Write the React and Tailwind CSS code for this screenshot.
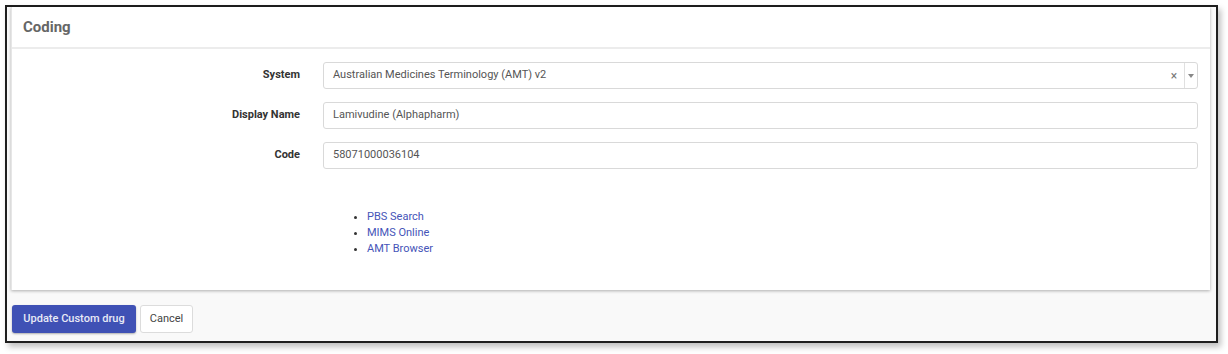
import React from 'react'

const font = { fontFamily: 'Roboto, "Liberation Sans", sans-serif' }

function Row({ label, children }) {
  return (
    <div className="flex items-center">
      <label className="w-[288px] shrink-0 text-right text-[11px] font-bold text-[#333]">{label}</label>
      <div className="ml-[23px] flex-1">{children}</div>
    </div>
  )
}

export default function App() {
  const links = ['PBS Search', 'MIMS Online', 'AMT Browser']
  return (
    <div className="w-[1228px] h-[354px] bg-white pt-[5px] pl-[5px]" style={font}>
      <div className="w-[1213px] h-[338px] border-2 border-[#1e1e1e] bg-[#f9f9f9] shadow-[3px_4px_6px_rgba(0,0,0,0.25)] flex flex-col">
        <div className="ml-[4px] mr-[6px] bg-white shadow-[0_1px_3px_rgba(0,0,0,0.3)] border-l border-[#e6e6e6]">
          <div className="h-[42px] flex items-center px-[11px] border-b-2 border-[#ececec]">
            <h2 className="text-[15px] font-bold text-[#666]">Coding</h2>
          </div>
          <div className="pt-[13px] pr-[12px] pb-[33px] flex flex-col gap-[13px]">
            <Row label="System">
              <div className="h-[27px] border border-[#d9d9d9] rounded-[3px] flex items-center text-[11px] text-[#555]">
                <span className="flex-1 pl-[9px]">Australian Medicines Terminology (AMT) v2</span>
                <span className="w-[20px] text-center text-[12px] text-[#777]">×</span>
                <span className="h-full border-l border-[#e0e0e0] w-[13px] flex items-center justify-center">
                  <svg width="6" height="4" viewBox="0 0 6 4"><path d="M0 0h6L3 4z" fill="#888" /></svg>
                </span>
              </div>
            </Row>
            <Row label="Display Name">
              <div className="h-[27px] border border-[#d9d9d9] rounded-[3px] flex items-center pl-[9px] text-[11px] text-[#555]">
                Lamivudine (Alphapharm)
              </div>
            </Row>
            <Row label="Code">
              <div className="h-[27px] border border-[#d9d9d9] rounded-[3px] flex items-center pl-[9px] text-[11px] text-[#555]">
                58071000036104
              </div>
            </Row>
            <div className="ml-[311px] mt-[27px]">
              <ul className="list-disc pl-[44px] text-[11px] leading-[16px] marker:text-[#333]">
                {links.map(l => (
                  <li key={l}><a href="#" className="text-[#4554b8]">{l}</a></li>
                ))}
              </ul>
            </div>
          </div>
        </div>
        <div className="flex gap-[4px] ml-[5px] mt-[15px]">
          <button className="h-[28px] w-[124px] rounded-[3px] bg-[#3f51b5] text-[#e8eaf6] text-[11px] font-medium shadow-[0_1px_2px_rgba(0,0,0,0.3)]">
            Update Custom drug
          </button>
          <button className="h-[28px] w-[53px] rounded-[3px] bg-white border border-[#dcdcdc] text-[#444] text-[11px]">
            Cancel
          </button>
        </div>
      </div>
    </div>
  )
}
